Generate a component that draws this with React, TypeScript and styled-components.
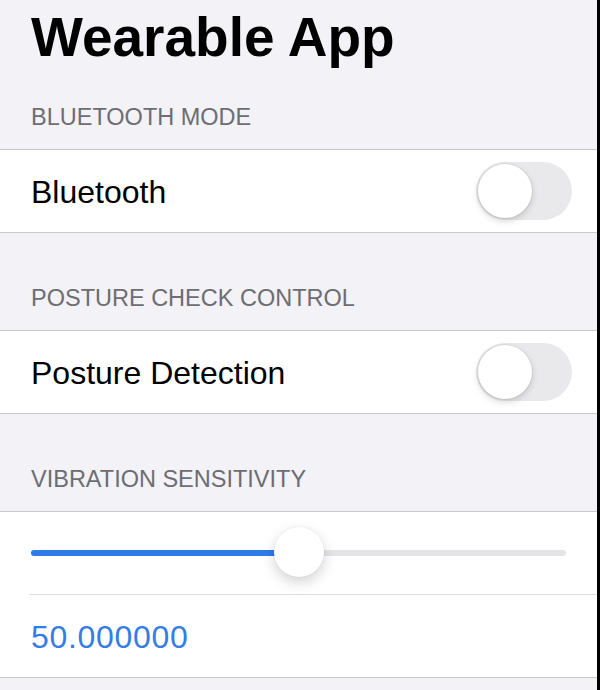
import React from "react";
import styled, { createGlobalStyle } from "styled-components";

const Global = createGlobalStyle`
  html, body { margin: 0; padding: 0; background: #000; }
  body { font-family: "Liberation Sans", Arial, sans-serif; -webkit-font-smoothing: antialiased; }
  #root { display: flex; }
`;

const Screen = styled.div`
  width: 597px;
  height: 690px;
  background: #f2f2f7;
  display: flex;
  flex-direction: column;
  overflow: hidden;
`;

const Title = styled.h1`
  margin: 0;
  padding: 4px 0 0 31px;
  height: 64px;
  font-size: 55px;
  line-height: 66px;
  font-weight: 700;
  letter-spacing: 0;
  color: #000;
`;

const SectionHeader = styled.div<{ $first?: boolean }>`
  padding: ${(p) => (p.$first ? "35px" : "51px")} 31px 18px 31px;
  font-size: 23.5px;
  line-height: 28px;
  color: #6d6d72;
`;

const Group = styled.div`
  background: #fff;
  border-top: 1px solid #c8c7cc;
  border-bottom: 1px solid #c8c7cc;
  display: flex;
  flex-direction: column;
`;

const Row = styled.div`
  height: 82px;
  display: flex;
  align-items: center;
  justify-content: space-between;
  padding: 0 25px 0 31px;
`;

const Label = styled.span<{ $blue?: boolean }>`
  font-size: 32px;
  padding-top: 2px;
  color: ${(p) => (p.$blue ? "#347de6" : "#000")};
  letter-spacing: ${(p) => (p.$blue ? "0.7px" : "0")};
`;

const Divider = styled.div`
  height: 1px;
  margin-left: 29px;
  background: #dedee0;
`;

const SwitchTrack = styled.div`
  width: 96px;
  height: 58px;
  border-radius: 29px;
  background: #e9e9eb;
  padding: 2px;
  box-sizing: border-box;
  display: flex;
  align-items: center;
`;

const SwitchKnob = styled.div`
  width: 54px;
  height: 54px;
  border-radius: 50%;
  background: #fff;
  box-shadow: 0 3px 7px rgba(0, 0, 0, 0.16), 0 0 0 1px rgba(0, 0, 0, 0.05);
`;

const SliderRow = styled.div`
  height: 82px;
  display: flex;
  align-items: center;
  padding: 0 31px;
`;

const Track = styled.div`
  position: relative;
  flex: 1;
  height: 6px;
  border-radius: 3px;
  background: #e4e4e6;
`;

const Fill = styled.div`
  height: 100%;
  border-radius: 3px;
  background: #2f7be8;
`;

const Thumb = styled.div`
  position: absolute;
  top: 50%;
  width: 50px;
  height: 50px;
  margin-left: -25px;
  margin-top: -26px;
  border-radius: 50%;
  background: #fff;
  box-shadow: 0 5px 14px rgba(0, 0, 0, 0.18), 0 0 0 0.5px rgba(0, 0, 0, 0.05);
`;

const Switch = () => (
  <SwitchTrack>
    <SwitchKnob />
  </SwitchTrack>
);

export default function App() {
  const value = 50;
  const pct = value;
  return (
    <>
      <Global />
      <Screen>
        <Title>Wearable App</Title>
        <SectionHeader $first>BLUETOOTH MODE</SectionHeader>
        <Group>
          <Row>
            <Label>Bluetooth</Label>
            <Switch />
          </Row>
        </Group>
        <SectionHeader>POSTURE CHECK CONTROL</SectionHeader>
        <Group>
          <Row>
            <Label>Posture Detection</Label>
            <Switch />
          </Row>
        </Group>
        <SectionHeader>VIBRATION SENSITIVITY</SectionHeader>
        <Group>
          <SliderRow>
            <Track>
              <Fill style={{ width: `${pct}%` }} />
              <Thumb style={{ left: `${pct}%` }} />
            </Track>
          </SliderRow>
          <Divider />
          <Row>
            <Label $blue>{value.toFixed(6)}</Label>
          </Row>
        </Group>
      </Screen>
    </>
  );
}
